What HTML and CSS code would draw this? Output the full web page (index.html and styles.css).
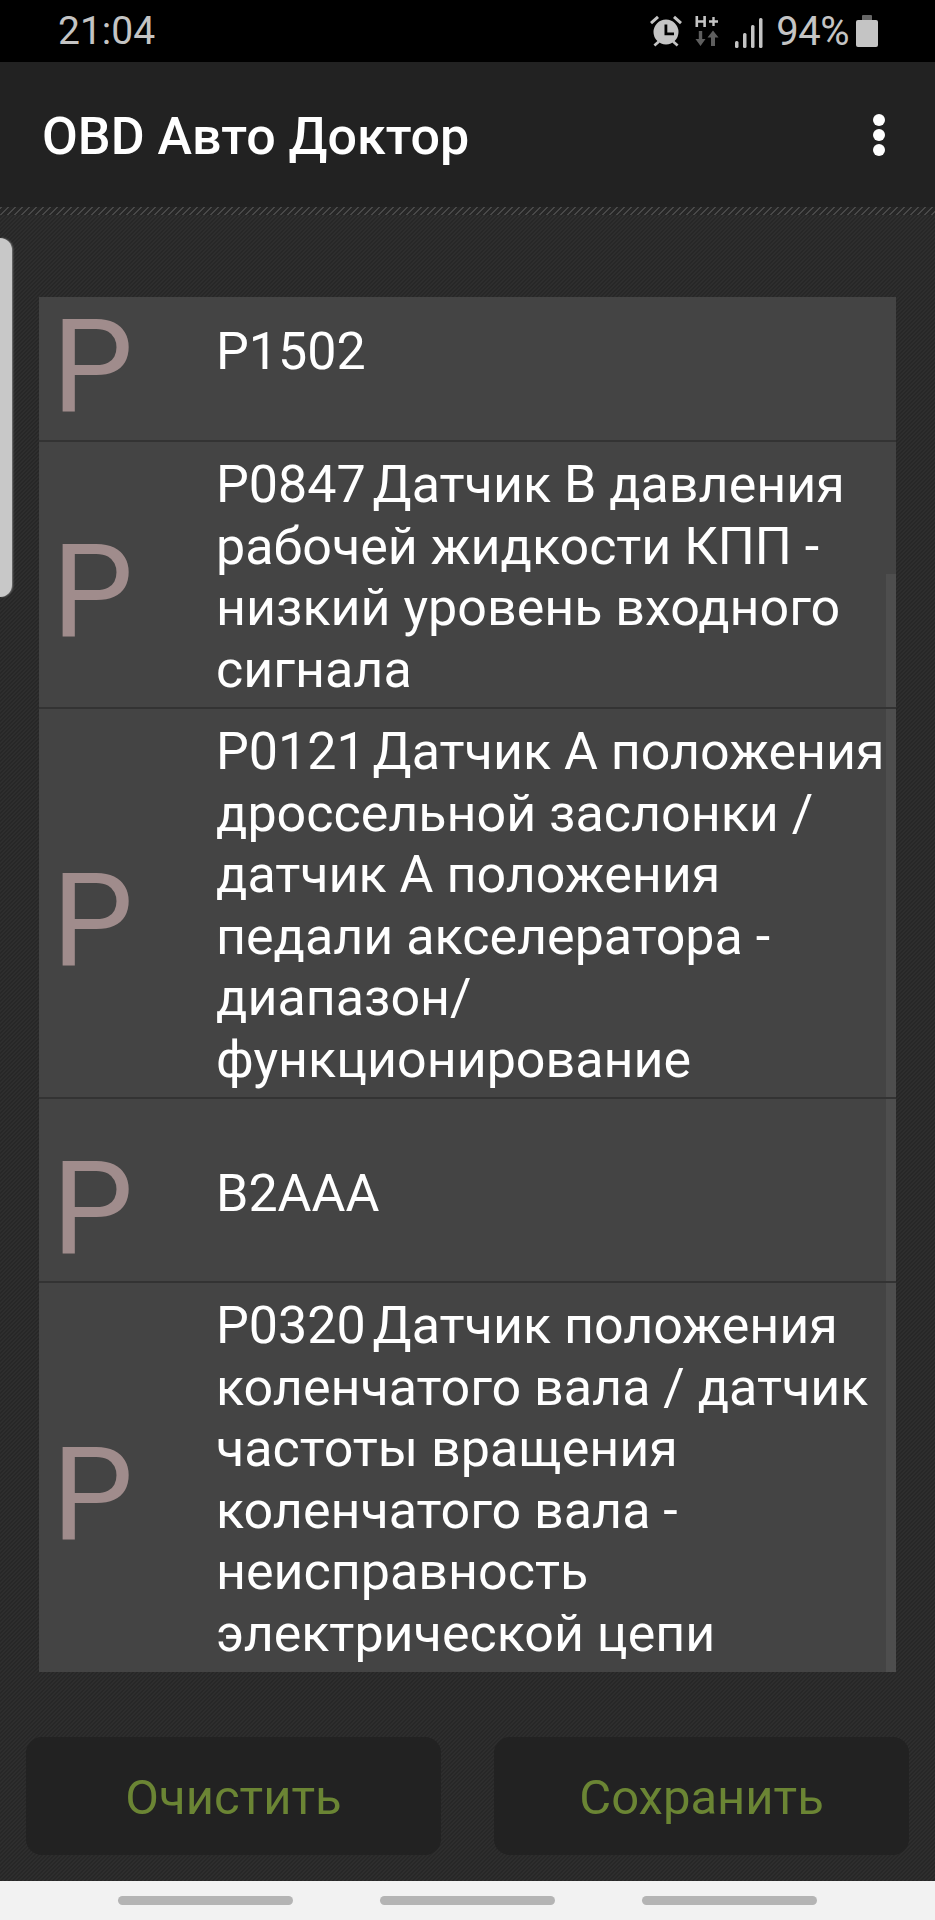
FILE: index.html
```html
<!DOCTYPE html>
<html lang="ru">
<head>
<meta charset="utf-8">
<title>OBD Авто Доктор</title>
<link rel="stylesheet" href="styles.css">
</head>
<body>
<div class="screen">
  <header class="status">
    <span class="clock">21:04</span>
    <div class="status-right">
      <svg class="ic-alarm" viewBox="0 0 32 32" width="32" height="32"><path d="M16 4.500a12.500 12.500 0 1 0 0 25 12.500 12.500 0 0 0 0-25z" fill="#c4c4c4"/><path d="M14.500 9.500h2.800v8H24v2.800h-9.500z" fill="#000"/><path d="M0 7 7 .8l2 2.300-7 6.200zM32 7 25 .8l-2 2.300 7 6.200zM3.500 29.500 8 25.500l1.800 2-4.500 4zM28.500 29.500 24 25.500l-1.800 2 4.500 4z" fill="#c4c4c4"/></svg>
      <svg class="ic-net" viewBox="0 0 24 30" width="24" height="30"><path d="M.5 0v11h2.600V6.700h5.200V11h2.600V0H8.300v4.300H3.100V0zM14 4.300h3.300V1h2.400v3.300H23v2.400h-3.300V10h-2.400V6.700H14z" fill="#c4c4c4"/><path d="M3.800 15h3.400v8h3.300l-5 7-5-7h3.300z" fill="#5e5e5e"/><path d="M18 14.500l5.500 7H20V30h-4v-8.500h-3.500z" fill="#5e5e5e"/></svg>
      <svg class="ic-signal" viewBox="0 0 28 30" width="28" height="30"><rect x="0" y="23" width="3.500" height="7" rx="1.500"/><rect x="8" y="15" width="3.500" height="15" rx="1.500"/><rect x="16" y="7" width="3.500" height="23" rx="1.500"/><rect x="24" y="0" width="3.500" height="30" rx="1.500"/></svg>
      <span class="battery-text">94%</span>
      <div class="battery"><i class="battery-cap"></i><i class="battery-body"></i></div>
    </div>
  </header>

  <div class="toolbar">
    <h1 class="title">OBD Авто Доктор</h1>
    <div class="overflow"><i></i><i></i><i></i></div>
  </div>
  <div class="hatch"></div>

  <main class="content">
    <div class="handle"></div>
    <div class="list">
      <div class="scrollbar"></div>
      <div class="row row-first">
        <span class="letter">P</span>
        <p class="code">P1502</p>
      </div>
      <div class="row">
        <span class="letter">P</span>
        <p class="code"><span class="dtc">P0847 </span>Датчик В давления рабочей жидкости КПП - низкий уровень входного сигнала</p>
      </div>
      <div class="row">
        <span class="letter">P</span>
        <p class="code"><span class="dtc">P0121 </span>Датчик А положения дроссельной заслонки / датчик А положения педали акселератора - диапазон/ функционирование</p>
      </div>
      <div class="row row-short">
        <span class="letter">P</span>
        <p class="code">B2AAA</p>
      </div>
      <div class="row">
        <span class="letter">P</span>
        <p class="code"><span class="dtc">P0320 </span>Датчик положения коленчатого вала / датчик частоты вращения коленчатого вала - неисправность электрической цепи</p>
      </div>
    </div>
    <div class="actions">
      <button class="btn" type="button">Очистить</button>
      <button class="btn" type="button">Сохранить</button>
    </div>
  </main>

  <nav class="navbar"><i></i><i></i><i></i></nav>
</div>
</body>
</html>
```
FILE: styles.css
```css
* { box-sizing: border-box; }
html, body { margin: 0; padding: 0; }
body { width: 935px; height: 1920px; overflow: hidden; background: #2a2a2a; font-family: Roboto, "Noto Sans", sans-serif; }
.screen { height: 1920px; display: flex; flex-direction: column; }

.status { height: 62px; background: #000; color: #c4c4c4; display: flex; align-items: center; justify-content: space-between; padding: 0 57px 0 58px; flex: none; }
.clock { font-size: 39px; line-height: 62px; }
.status-right { display: flex; align-items: center; }
.ic-alarm { margin-right: 13px; }
.ic-net { margin-right: 16px; }
.ic-signal { fill: #c4c4c4; margin-right: 13px; margin-top: 3px; }
.battery-text { font-size: 40px; letter-spacing: -0.5px; margin-right: 7px; }
.battery { width: 22px; height: 32px; display: flex; flex-direction: column; align-items: center; }
.battery-cap { width: 10px; height: 5px; background: #666; border-radius: 1px 1px 0 0; }
.battery-body { width: 22px; height: 27px; background: #c4c4c4; border-radius: 2px; }

.toolbar { height: 145px; background: #222; display: flex; align-items: center; justify-content: space-between; padding: 0 50px 0 42px; flex: none; }
.title { margin: 0; font-size: 52px; font-weight: 500; color: #fff; line-height: 60px; position: relative; top: 2px; }
.overflow { display: flex; flex-direction: column; gap: 3px; }
.overflow i { display: block; width: 12px; height: 12px; border-radius: 50%; background: #fff; }

.hatch { height: 8px; flex: none; background: repeating-linear-gradient(135deg, #484848 0 2px, #262626 2px 4.950px); }

.content { flex: 1; position: relative; padding: 82px 39px 0; display: flex; flex-direction: column;
  background: repeating-linear-gradient(135deg, #2e2e2e 0 1.414px, #272727 1.414px 2.828px); }
.handle { position: absolute; left: 0; top: 23px; width: 12px; height: 359px; background: #c8c8c8; border-radius: 0 12px 12px 0; box-shadow: 1px 0 2px #777; }

.list { position: relative; height: 1375px; width: 857px; overflow: hidden; background: #444; flex: none; }
.scrollbar { position: absolute; right: 0; top: 277px; bottom: 0; width: 10px; background: #4e4e4e; }

.row { position: relative; display: flex; align-items: center; padding: 12px 0 7px; border-bottom: 2px solid #333; }
.row:last-of-type { border-bottom: 0; }
.row-short { height: 184px; padding: 8px 0 0; }
.row-first { height: 145px; padding: 0 0 33px; }
.letter { flex: none; width: 177px; padding-left: 13px; font-size: 129px; line-height: 100px; color: #a08c8c; position: relative; top: 15px; }
.code { margin: 0; width: 673px; font-size: 52px; line-height: 61.500px; color: #fff; position: relative; z-index: 1; }
.dtc { word-spacing: -6px; }

.actions { display: flex; justify-content: space-between; margin: 65px -13px 0; }
.btn { width: 415px; height: 118px; border: 0; border-radius: 16px; background: #222; color: #6b8534; font-family: inherit; font-size: 49px; padding: 2px 0 0; }

.navbar { height: 39px; background: #f2f2f2; display: flex; justify-content: space-between; padding: 15px 118px 0; flex: none; }
.navbar i { display: block; width: 175px; height: 9px; border-radius: 5px; background: #b4b4b4; }
```
